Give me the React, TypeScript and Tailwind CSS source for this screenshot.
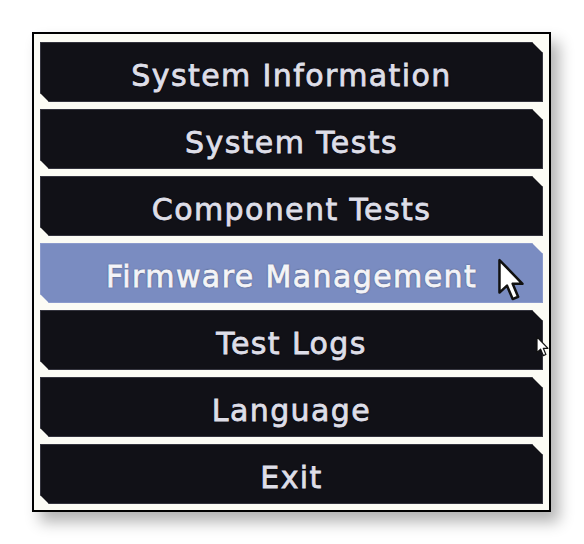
import React from 'react';

const items = [
  'System Information',
  'System Tests',
  'Component Tests',
  'Firmware Management',
  'Test Logs',
  'Language',
  'Exit',
];

const Pointer = ({ className }: { className?: string }) => (
  <svg className={className} viewBox="0 0 13 21" fill="none">
    <path
      d="M1 1 L1 16.5 L4.6 13.2 L7.3 19.6 L9.9 18.5 L7.3 12.3 L12 12.3 Z"
      fill="#ffffff"
      stroke="#111111"
      strokeWidth="1.2"
      strokeLinejoin="round"
    />
  </svg>
);

const MenuButton = ({ label, active }: { label: string; active: boolean }) => (
  <div
    className={`relative flex h-[60px] items-center justify-center pt-[6px] [clip-path:polygon(0_0,calc(100%-11px)_0,100%_11px,100%_100%,9px_100%,0_calc(100%-9px))] ${
      active
        ? 'bg-[#7a8cc1] text-[#f4f4f8] shadow-[inset_0_0_0_1px_#8c9bcc]'
        : 'bg-[#111117] text-[#dedee8] shadow-[inset_0_0_0_1px_#34343e]'
    }`}
  >
    <span className="font-['DejaVu_Sans',sans-serif] text-[30px] tracking-[1.4px] [-webkit-text-stroke:0.8px_currentColor] [text-shadow:0_0_2px_rgba(0,0,0,0.7)]">
      {label}
    </span>
    {active && <Pointer className="absolute left-[456px] top-[15px] h-[44px] w-[30px]" />}
  </div>
);

export default function App() {
  return (
    <div className="relative h-[544px] w-[584px] bg-white">
      <div className="pl-[32px] pt-[32px]">
        <div className="h-[480px] w-[519px] border-2 border-black bg-[#fcfcf5] shadow-[8px_10px_14px_rgba(0,0,0,0.3)]">
          <div className="flex flex-col gap-[7px] pl-[6px] pr-[6px] pt-[8px]">
            {items.map((item) => (
              <MenuButton key={item} label={item} active={item === 'Firmware Management'} />
            ))}
          </div>
        </div>
      </div>
      <Pointer className="absolute left-[536px] top-[336px] h-[21px] w-[13px]" />
    </div>
  );
}
